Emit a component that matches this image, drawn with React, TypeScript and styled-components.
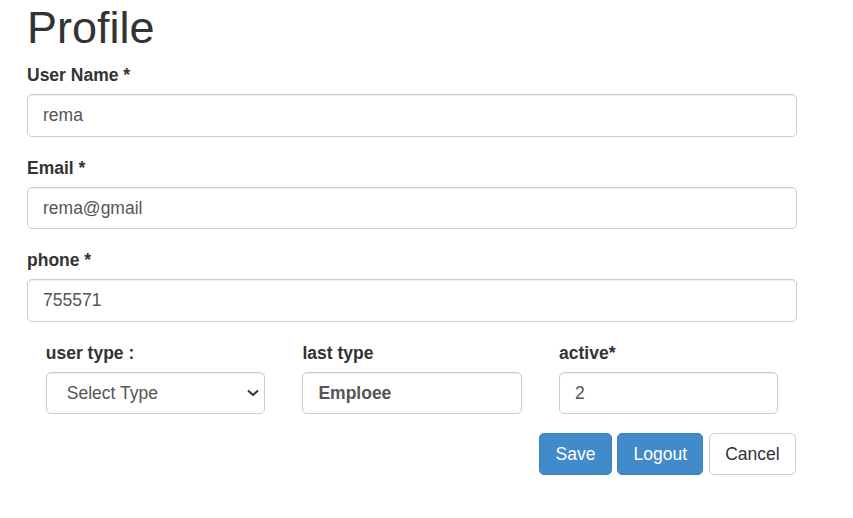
import React from "react";
import styled, { createGlobalStyle } from "styled-components";

const Global = createGlobalStyle`
  html, body { margin: 0; padding: 0; background: #fff; }
  body {
    font-family: "Liberation Sans", Arial, Helvetica, sans-serif;
    font-size: 17.5px;
    line-height: 25px;
    color: #333;
  }
  * { box-sizing: border-box; }
`;

const Page = styled.div`
  width: 770px;
  margin-left: 27px;
`;

const Title = styled.h1`
  font-size: 45px;
  line-height: 49.5px;
  font-weight: 500;
  margin: 2.5px 0 11px;
  color: #333;
`;

const Group = styled.div`
  margin-bottom: 18.75px;
`;

const Label = styled.label`
  display: block;
  font-weight: 700;
  line-height: 25px;
  margin-bottom: 6.25px;
  color: #333;
`;

const Star = styled.span`
  color: #1f2d4d;
`;

const Input = styled.input<{ $bold?: boolean }>`
  display: block;
  width: 100%;
  height: 42.5px;
  padding: 7.5px 15px;
  font-family: inherit;
  font-size: 17.5px;
  line-height: 25px;
  font-weight: ${(p) => (p.$bold ? 700 : 400)};
  color: #555;
  background: #fff;
  border: 1px solid #ccc;
  border-radius: 5px;
  box-shadow: inset 0 1px 1px rgba(0, 0, 0, 0.075);
  outline: none;
`;

const SelectWrap = styled.div`
  position: relative;
`;

const Select = styled.select`
  display: block;
  width: 100%;
  height: 42.5px;
  padding: 7.5px 15px 7.5px 20px;
  font-family: inherit;
  font-size: 17.5px;
  line-height: 25px;
  color: #555;
  background: #fff;
  border: 1px solid #ccc;
  border-radius: 5px;
  box-shadow: inset 0 1px 1px rgba(0, 0, 0, 0.075);
  appearance: none;
  -webkit-appearance: none;
  outline: none;
`;

const Chevron = styled.svg`
  position: absolute;
  right: 6px;
  top: 17px;
  width: 12px;
  height: 8px;
  pointer-events: none;
`;

const Row = styled.div`
  display: grid;
  grid-template-columns: repeat(3, 1fr);
`;

const Col = styled.div`
  padding: 0 18.75px;
`;

const Actions = styled.div`
  display: flex;
  justify-content: flex-end;
  gap: 5.5px;
  padding-right: 1px;
`;

const Button = styled.button<{ $primary?: boolean }>`
  height: 41.5px;
  padding: 7.5px 15.3px;
  font-family: inherit;
  font-size: 17.5px;
  line-height: 25px;
  border-radius: 5px;
  border: 1px solid ${(p) => (p.$primary ? "#3a7fbd" : "#ccc")};
  background: ${(p) => (p.$primary ? "#428bca" : "#fff")};
  color: ${(p) => (p.$primary ? "#fff" : "#333")};
  cursor: pointer;
`;

export default function App() {
  return (
    <>
      <Global />
      <Page>
        <Title>Profile</Title>
        <Group>
          <Label>User Name *</Label>
          <Input defaultValue="rema" />
        </Group>
        <Group>
          <Label>Email *</Label>
          <Input defaultValue="rema@gmail" />
        </Group>
        <Group>
          <Label>phone *</Label>
          <Input defaultValue="755571" />
        </Group>
        <Row>
          <Col>
            <Group>
              <Label>user type :</Label>
              <SelectWrap>
                <Select defaultValue="">
                  <option value="">Select Type</option>
                  <option value="admin">Admin</option>
                  <option value="employee">Employee</option>
                </Select>
                <Chevron viewBox="0 0 12 8">
                  <path d="M1 1.5 L6 6 L11 1.5" fill="none" stroke="#333" strokeWidth="2" />
                </Chevron>
              </SelectWrap>
            </Group>
          </Col>
          <Col>
            <Group>
              <Label>last type</Label>
              <Input $bold defaultValue="Emploee" />
            </Group>
          </Col>
          <Col>
            <Group>
              <Label>
                active<Star>*</Star>
              </Label>
              <Input defaultValue="2" />
            </Group>
          </Col>
        </Row>
        <Actions>
          <Button $primary>Save</Button>
          <Button $primary>Logout</Button>
          <Button>Cancel</Button>
        </Actions>
      </Page>
    </>
  );
}
